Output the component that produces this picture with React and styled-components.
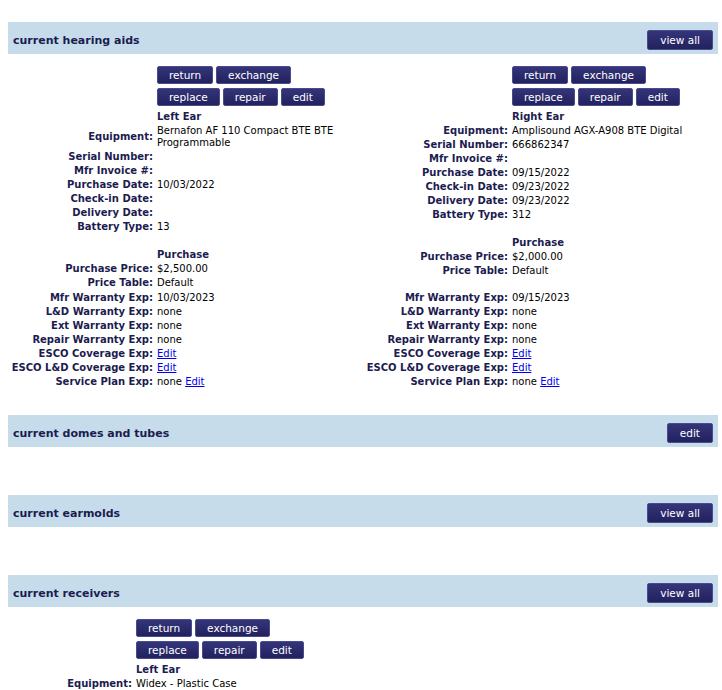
import React from 'react';
import styled, { createGlobalStyle } from 'styled-components';

const Global = createGlobalStyle`
  body {
    margin: 0;
    background: #fff;
    font-family: "DejaVu Sans", Verdana, sans-serif;
    font-size: 10px;
    color: #000;
  }
`;

const Page = styled.div`
  padding: 22px 4px 0 8px;
`;

const Section = styled.div`
  margin-bottom: 26px;
`;

const Header = styled.div`
  display: flex;
  align-items: center;
  justify-content: space-between;
  box-sizing: border-box;
  height: 32px;
  padding: 4px 5px 0;
  background: #c6dcea;
  font-weight: bold;
  font-size: 11px;
  color: #1c1c50;
`;

const Button = styled.button`
  font-family: inherit;
  font-size: 10.5px;
  color: #fff;
  background: linear-gradient(#34347a, #22225e);
  border: 1px solid #4a4a8e;
  border-radius: 2px;
  height: ${p => (p.$big ? 20 : 18)}px;
  padding: 0 ${p => (p.$big ? 12 : 11)}px;
  cursor: pointer;
`;

const Body = styled.div`
  padding-top: 11px;
  min-height: ${p => (p.$empty ? 11 : 0)}px;
`;

const Columns = styled.div`
  display: grid;
  grid-template-columns: 355px 355px;
  row-gap: 1px;
  align-items: start;
`;

const Fields = styled.div`
  display: grid;
  grid-template-columns: ${p => p.$label}px 1fr;
  column-gap: 4px;
  align-items: center;
  line-height: 12px;
`;

const Label = styled.div`
  text-align: right;
  font-weight: bold;
  color: #1c1c50;
  padding: 1px 0;
  white-space: nowrap;
`;

const Value = styled.div`
  padding: 1px 0;
  min-height: 12px;
  font-weight: ${p => (p.$title ? 'bold' : 'normal')};
  color: ${p => (p.$title ? '#1c1c50' : '#000')};
`;

const Buttons = styled.div`
  display: flex;
  flex-direction: column;
  gap: 4px;
  margin-bottom: 3px;
`;

const ButtonRow = styled.div`
  display: flex;
  gap: 3px;
`;

const Link = styled.a`
  color: #0000ee;
  text-decoration: underline;
  cursor: pointer;
`;

function Row({ label, children, title }) {
  return (
    <>
      <Label>{label}</Label>
      <Value $title={title}>{children}</Value>
    </>
  );
}

function Actions() {
  return (
    <Buttons>
      <ButtonRow>
        <Button>return</Button>
        <Button>exchange</Button>
      </ButtonRow>
      <ButtonRow>
        <Button>replace</Button>
        <Button>repair</Button>
        <Button>edit</Button>
      </ButtonRow>
    </Buttons>
  );
}

function EarInfo({ ear, label }) {
  return (
    <Fields $label={label}>
      <Label />
      <Value><Actions /></Value>
      <Row title>{ear.side}</Row>
      <Row label="Equipment:">{ear.equipment}</Row>
      <Row label="Serial Number:">{ear.serial}</Row>
      <Row label="Mfr Invoice #:" />
      <Row label="Purchase Date:">{ear.purchase}</Row>
      <Row label="Check-in Date:">{ear.checkin}</Row>
      <Row label="Delivery Date:">{ear.delivery}</Row>
      <Row label="Battery Type:">{ear.battery}</Row>
      <Row />
      <Row title>Purchase</Row>
      <Row label="Purchase Price:">{ear.price}</Row>
      <Row label="Price Table:">Default</Row>
    </Fields>
  );
}

function Warranty({ ear }) {
  return (
    <Fields $label={145}>
      <Row label="Mfr Warranty Exp:">{ear.mfrWarranty}</Row>
      <Row label="L&D Warranty Exp:">none</Row>
      <Row label="Ext Warranty Exp:">none</Row>
      <Row label="Repair Warranty Exp:">none</Row>
      <Row label="ESCO Coverage Exp:"><Link>Edit</Link></Row>
      <Row label="ESCO L&D Coverage Exp:"><Link>Edit</Link></Row>
      <Row label="Service Plan Exp:">none <Link>Edit</Link></Row>
    </Fields>
  );
}

const left = {
  side: 'Left Ear',
  equipment: 'Bernafon AF 110 Compact BTE BTE Programmable',
  serial: '',
  purchase: '10/03/2022',
  checkin: '',
  delivery: '',
  battery: '13',
  price: '$2,500.00',
  mfrWarranty: '10/03/2023',
};

const right = {
  side: 'Right Ear',
  equipment: 'Amplisound AGX-A908 BTE Digital',
  serial: '666862347',
  purchase: '09/15/2022',
  checkin: '09/23/2022',
  delivery: '09/23/2022',
  battery: '312',
  price: '$2,000.00',
  mfrWarranty: '09/15/2023',
};

export default function App() {
  return (
    <Page>
      <Global />
      <Section>
        <Header>current hearing aids<Button $big>view all</Button></Header>
        <Body>
          <Columns>
            <EarInfo ear={left} label={145} />
            <EarInfo ear={right} label={145} />
            <Warranty ear={left} />
            <Warranty ear={right} />
          </Columns>
        </Body>
      </Section>

      <Section>
        <Header>current domes and tubes<Button $big>edit</Button></Header>
        <Body $empty />
      </Section>

      <Section>
        <Header>current earmolds<Button $big>view all</Button></Header>
        <Body $empty />
      </Section>

      <Section>
        <Header>current receivers<Button $big>view all</Button></Header>
        <Body>
          <Fields $label={124}>
            <Label />
            <Value><Actions /></Value>
            <Row title>Left Ear</Row>
            <Row label="Equipment:">Widex - Plastic Case</Row>
          </Fields>
        </Body>
      </Section>
    </Page>
  );
}
